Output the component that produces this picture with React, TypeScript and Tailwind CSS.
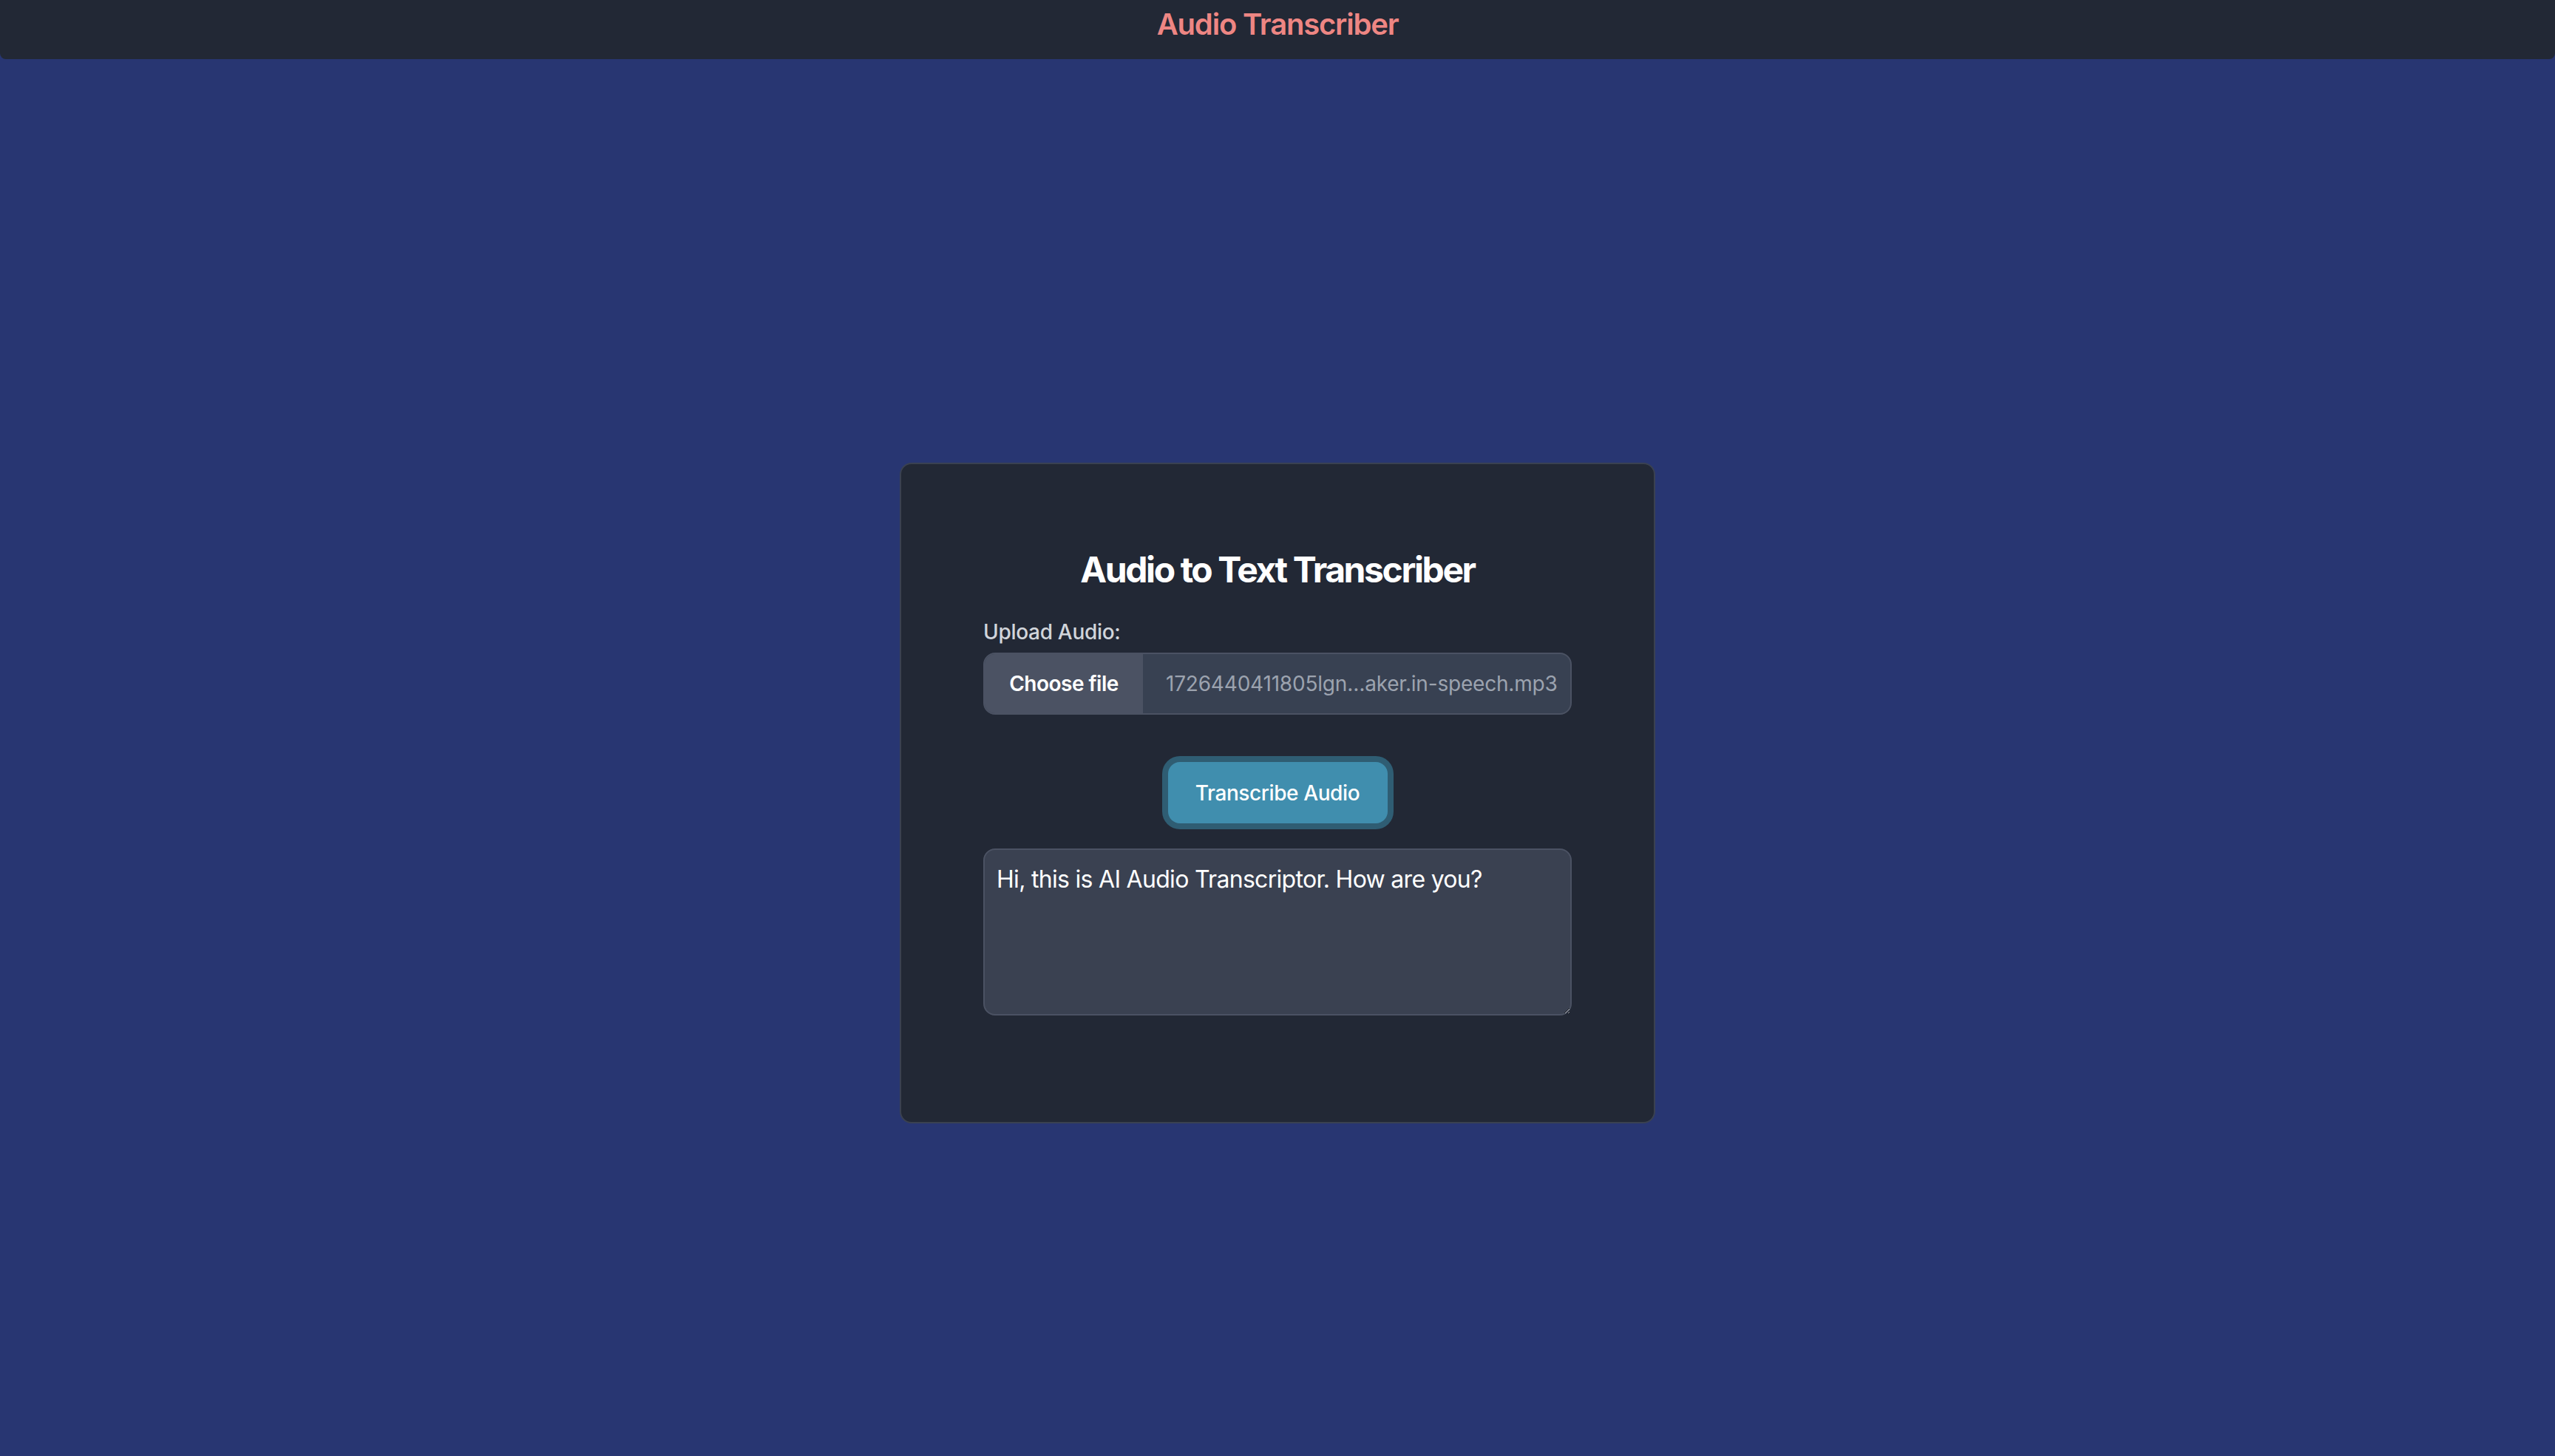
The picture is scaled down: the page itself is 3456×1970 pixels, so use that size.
// Audio transcriber page

function Header() {
  return (
    <header className="h-[80px] rounded-b-lg bg-[#222835] pt-[5px] text-center">
      <h1 className="text-[40px] leading-[56px] font-semibold tracking-[-1.2px] text-[#ee8683]">Audio Transcriber</h1>
    </header>
  );
}

function FileField() {
  return (
    <div className="flex h-[84px] w-full overflow-hidden rounded-[16px] border-2 border-[#4b5263] bg-[#384152]">
      <span className="flex w-[214px] shrink-0 items-center justify-center bg-[#4b5263] text-[28px] font-semibold tracking-[-0.5px] text-white">
        Choose file
      </span>
      <span className="flex items-center truncate pl-[31px] text-[28px] tracking-[-0.2px] text-[#9ca3af]">
        1726440411805lgn…aker.in-speech.mp3
      </span>
    </div>
  );
}

export default function App() {
  return (
    <div className="min-h-screen bg-[#283672] font-['Inter','Noto_Sans',sans-serif]">
      <Header />

      <main className="flex justify-center pt-[546px] pb-[300px]">
        <div className="w-[1022px] rounded-[16px] border-2 border-[#3a4151] bg-[#222835] px-[111px] pt-[111px] pb-[144px]">
          <h2 className="mb-[32px] text-center text-[48px] leading-[64px] font-bold tracking-[-2.4px] text-white">
            Audio to Text Transcriber
          </h2>

          <label className="mb-[8px] block text-[28px] leading-[40px] font-medium tracking-[-0.3px] text-[#d1d5db]">
            Upload Audio:
          </label>
          <FileField />

          <div className="mt-[64px] flex justify-center">
            <button className="flex h-[83px] w-[297px] items-center justify-center rounded-[16px] bg-[#408eae] text-[28px] font-medium tracking-[-0.4px] text-white ring-[8px] ring-[#2f5d73]">
              Transcribe Audio
            </button>
          </div>

          <textarea
            readOnly
            defaultValue="Hi, this is AI Audio Transcriptor. How are you?"
            className="mt-[34px] block h-[226px] w-full resize rounded-[16px] border-2 border-[#4b5263] bg-[#3a4151] px-[16px] py-[16px] text-[32px] leading-[48px] tracking-[-0.7px] text-white outline-none"
          />
        </div>
      </main>
    </div>
  );
}
